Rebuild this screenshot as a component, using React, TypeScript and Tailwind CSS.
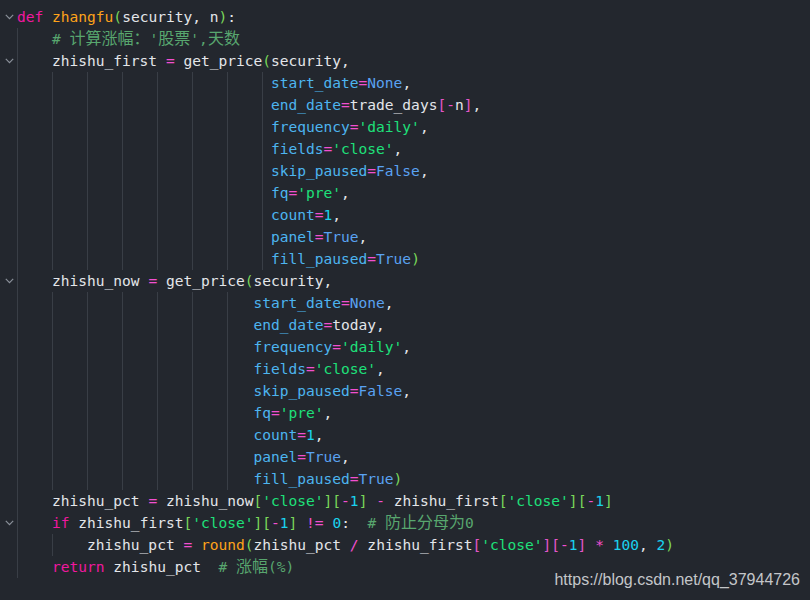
import React from "react";

type Tok = [string, string];

const K = "text-[#f0179f]";
const F = "text-[#ffa31a]";
const O = "text-[#f24fd0]";
const P = "text-[#4db5f0]";
const C = "text-[#5aa2f2]";
const N = "text-[#1ad2ee]";
const S = "text-[#1ee07a]";
const M = "text-[#58a66e]";
const B1 = "text-[#7ad85a]";
const B2 = "text-[#e356c8]";
const T = "text-[#e3e6ea]";
const CJK = "cjk";

const W: Record<number, string> = { 1: "w-[1ch]", 2: "w-[2ch]", 3: "w-[3ch]", 4: "w-[4ch]" };

type Line = { indent: number; toks: Tok[]; fold?: boolean };

const args = (indent: number, second: Tok[]): Line[] => [
  { indent, toks: [["start_date", P], ["=", O], ["None", C], [",", T]] },
  { indent, toks: second },
  { indent, toks: [["frequency", P], ["=", O], ["'daily'", S], [",", T]] },
  { indent, toks: [["fields", P], ["=", O], ["'close'", S], [",", T]] },
  { indent, toks: [["skip_paused", P], ["=", O], ["False", C], [",", T]] },
  { indent, toks: [["fq", P], ["=", O], ["'pre'", S], [",", T]] },
  { indent, toks: [["count", P], ["=", O], ["1", N], [",", T]] },
  { indent, toks: [["panel", P], ["=", O], ["True", C], [",", T]] },
  { indent, toks: [["fill_paused", P], ["=", O], ["True", C], [")", B1]] },
];

const closeIdx = (b: string): Tok[] => [
  ["[", b], ["'close'", S], ["]", b], ["[", b], ["-", O], ["1", N], ["]", b],
];

const lines: Line[] = [
  { indent: 0, fold: true, toks: [["def", K], [" ", T], ["zhangfu", F], ["(", B1], ["security, n", T], [")", B1], [":", T]] },
  { indent: 4, toks: [["# ", M], ["计算涨幅：", CJK], ["'", M], ["股票", CJK], ["',", M], ["天数", CJK]] },
  { indent: 4, fold: true, toks: [["zhishu_first ", T], ["=", O], [" ", T], ["get_price", T], ["(", B1], ["security,", T]] },
  ...args(29, [["end_date", P], ["=", O], ["trade_days", T], ["[", B2], ["-", O], ["n", T], ["]", B2], [",", T]]),
  { indent: 4, fold: true, toks: [["zhishu_now ", T], ["=", O], [" ", T], ["get_price", T], ["(", B1], ["security,", T]] },
  ...args(27, [["end_date", P], ["=", O], ["today", T], [",", T]]),
  {
    indent: 4,
    toks: [["zhishu_pct ", T], ["=", O], [" zhishu_now", T], ...closeIdx(B1), [" ", T], ["-", O], [" zhishu_first", T], ...closeIdx(B1)],
  },
  {
    indent: 4,
    fold: true,
    toks: [["if", K], [" zhishu_first", T], ...closeIdx(B1), [" ", T], ["!=", O], [" ", T], ["0", N], [":  ", T], ["# ", M], ["防止分母为", CJK], ["0", M]],
  },
  {
    indent: 8,
    toks: [["zhishu_pct ", T], ["=", O], [" ", T], ["round", F], ["(", B1], ["zhishu_pct ", T], ["/", O], [" zhishu_first", T], ...closeIdx(B2), [" ", T], ["*", O], [" ", T], ["100", N], [", ", T], ["2", N], [")", B1]],
  },
  { indent: 4, toks: [["return", K], [" zhishu_pct  ", T], ["# ", M], ["涨幅", CJK], ["(%)", M]] },
];

function Chevron() {
  return (
    <svg width="9" height="6" viewBox="0 0 9 6" className="block">
      <path d="M0.8 0.8 L4.5 4.6 L8.2 0.8" fill="none" stroke="#8a9099" strokeWidth="1.2" />
    </svg>
  );
}

function Indent({ n }: { n: number }) {
  const parts: number[] = [];
  let r = n;
  while (r > 0) {
    parts.push(Math.min(4, r));
    r -= 4;
  }
  return (
    <>
      {parts.map((w, i) => (
        <span key={i} className={`inline-block h-[22px] align-top border-l border-[#393e46] ${W[w]}`} />
      ))}
    </>
  );
}

export default function App() {
  return (
    <div
      className="relative w-[810px] h-[600px] overflow-hidden bg-[#23272e] pt-[6px]"
      style={{ fontFamily: '"DejaVu Sans Mono", "Noto Sans CJK SC", monospace' }}
    >
      {lines.map((ln, i) => (
        <div key={i} className="flex h-[22px] leading-[22px] text-[14.55px]">
          <div className="w-[17px] flex items-center justify-center pl-[2px] shrink-0">{ln.fold ? <Chevron /> : null}</div>
          <div className="whitespace-pre">
            <Indent n={ln.indent} />
            {ln.toks.map(([t, c], j) =>
              c === CJK ? (
                <span key={j} className="text-[#58a66e] text-[16px] leading-none" style={{ fontFamily: '"Noto Sans CJK SC", sans-serif' }}>
                  {t}
                </span>
              ) : (
                <span key={j} className={c}>
                  {t}
                </span>
              )
            )}
          </div>
        </div>
      ))}
      <div
        className="absolute right-[10px] bottom-[11px] text-[16px] leading-[18px] text-[#c4c6c9]"
        style={{ fontFamily: '"Liberation Sans", Arial, sans-serif' }}
      >
        https://blog.csdn.net/qq_37944726
      </div>
    </div>
  );
}
